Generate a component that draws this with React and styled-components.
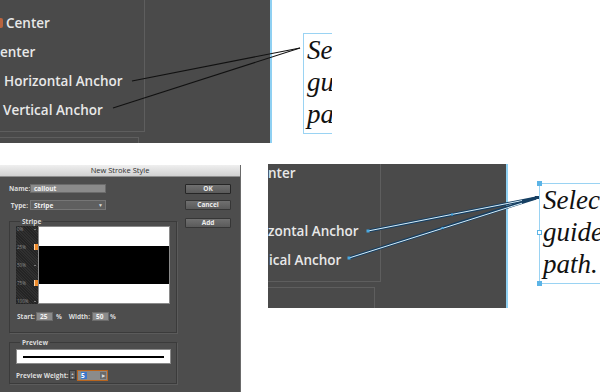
import React from "react";
import styled, { createGlobalStyle } from "styled-components";

const Global = createGlobalStyle`
  html, body { margin: 0; padding: 0; background: #fff; }
  body { width: 600px; height: 392px; overflow: hidden; font-family: "Open Sans", "Liberation Sans", sans-serif; }
  * { box-sizing: border-box; }
`;

const Page = styled.div`
  width: 600px;
  height: 392px;
  display: flex;
  flex-direction: column;
  background: #fff;
  overflow: hidden;
`;

const BottomRow = styled.div`
  display: flex;
  align-items: flex-start;
  margin-top: 21px;
  gap: 27px;
`;

/* ---------- InDesign canvas shots ---------- */

const ShotFrame = styled.div`
  position: relative;
  flex: none;
  display: flex;
  width: ${(p) => p.$w}px;
  height: ${(p) => p.$h}px;
  overflow: hidden;
  background: #fff;
`;

const Panel = styled.div`
  flex: none;
  width: ${(p) => p.$w + 2}px;
  height: 100%;
  background: #4a4a4a;
  border-right: 2px solid #8fd0f2;
  overflow: hidden;
`;

const PanelContent = styled.div`
  margin-left: ${(p) => -p.$dx}px;
  margin-top: ${(p) => -p.$dy}px;
  width: 320px;
`;

const InnerBox = styled.div`
  width: 145px;
  height: 132px;
  border-right: 1px solid #5e5e5e;
  border-bottom: 1px solid #5e5e5e;
  padding-top: 8px;
  display: flex;
  flex-direction: column;
`;

const Row = styled.div`
  height: 29px;
  display: flex;
  align-items: center;
  padding-left: ${(p) => p.$x}px;
  white-space: nowrap;
  font-family: "Open Sans", "DejaVu Sans", sans-serif;
  font-weight: 600;
  font-size: 13.5px;
  color: #e8e8e8;
`;

const RowIcon = styled.span`
  width: 3px;
  height: 10px;
  margin-left: -6px;
  margin-right: 3px;
  background: #b8633e;
  border-radius: 0 2px 2px 0;
`;

const LowerBox = styled.div`
  margin-top: 5px;
  width: 139px;
  height: 40px;
  border-top: 1px solid #5e5e5e;
  border-right: 1px solid #5e5e5e;
  padding: 15px 0 0 34px;
  font-size: 13px;
  font-weight: 600;
  color: #e4e4e4;
  line-height: 14px;
`;

const Gutter = styled.div`
  flex: 1;
  padding-left: 31px;
  padding-top: ${(p) => p.$top}px;
`;

const TextFrame = styled.div`
  position: relative;
  width: 150px;
  height: 101px;
  border: 1px solid #9ad3f3;
  padding: 0 0 0 3px;
  font-family: "Liberation Serif", "DejaVu Serif", serif;
  font-style: italic;
  font-size: 27px;
  line-height: 32px;
  color: #111;
  white-space: nowrap;
`;

const Handle = styled.span`
  position: absolute;
  left: -3px;
  top: ${(p) => p.$top};
  width: 5px;
  height: 5px;
  border: 1px solid #5cb4e6;
  background: ${(p) => (p.$filled ? "#5cb4e6" : "#fff")};
`;

const Overlay = styled.svg`
  position: absolute;
  left: 0;
  top: 0;
  pointer-events: none;
`;

const SCENE_LINES = [
  [132, 81, 300, 48],
  [113, 108, 300, 48],
];

function Shot({ w, h, panelW, dx, dy, rows, lower, selected }) {
  return (
    <ShotFrame $w={w} $h={h}>
      <Panel $w={panelW}>
        <PanelContent $dx={dx} $dy={dy}>
          <InnerBox>
            {rows.map((r, i) => (
              <Row key={i} $x={r.x}>
                {r.icon && <RowIcon />}
                {r.t}
              </Row>
            ))}
          </InnerBox>
          <LowerBox>{lower}</LowerBox>
        </PanelContent>
      </Panel>
      <Gutter $top={33 - dy}>
        <TextFrame>
          Select
          <br />
          guides
          <br />
          path.
          {selected && (
            <>
              <Handle $top="-3px" $filled />
              <Handle $top="46px" />
              <Handle $top="97px" $filled />
            </>
          )}
        </TextFrame>
      </Gutter>
      <Overlay width={w} height={h} viewBox={`0 0 ${w} ${h}`}>
        {SCENE_LINES.map(([x1, y1, x2, y2], i) => {
          const a = [x1 - dx, y1 - dy, x2 - dx, y2 - dy];
          return selected ? (
            <g key={i}>
              <line x1={a[0]} y1={a[1]} x2={a[2]} y2={a[3]} stroke="#163f62" strokeWidth="3" />
              <line x1={a[0]} y1={a[1]} x2={a[2] - 14} y2={a[3] + 2.6 * (i + 1)} stroke="#d6eefb" strokeWidth="1" />
              <rect x={a[0] - 1.5} y={a[1] - 1.5} width="3" height="3" fill="#4aa8e0" />
              <rect x={(a[0] + a[2]) / 2 - 1} y={(a[1] + a[3]) / 2 - 1} width="2" height="2" fill="#4aa8e0" />
            </g>
          ) : (
            <line key={i} x1={a[0]} y1={a[1]} x2={a[2]} y2={a[3]} stroke="#111" strokeWidth="1.1" />
          );
        })}
        {selected && <rect x={300 - dx - 1} y={48 - dy - 2} width="4" height="3" fill="#163f62" />}
      </Overlay>
    </ShotFrame>
  );
}

/* ---------- Dialog ---------- */

const Dialog = styled.div`
  flex: none;
  width: 241px;
  height: 227px;
  margin-top: 1px;
  display: flex;
  flex-direction: column;
  background: #4d4d4d;
  border-right: 1px solid #6a6a6a;
  font-family: "Open Sans", "Liberation Sans", sans-serif;
`;

const TitleBar = styled.div`
  height: 12px;
  background: linear-gradient(#efefef, #d1d1d1);
  border-bottom: 1px solid #8e8e8e;
  text-align: center;
  font-size: 7.5px;
  line-height: 11px;
  color: #2e2e2e;
`;

const DialogBody = styled.div`
  flex: 1;
  display: grid;
  grid-template-columns: 185px 46px;
  align-items: start;
`;

const LeftCol = styled.div`
  display: flex;
  flex-direction: column;
  padding: 6px 0 0 9px;
`;

const FieldRow = styled.div`
  display: flex;
  align-items: center;
  height: 10px;
  margin-top: ${(p) => p.$mt || 0}px;
`;

const Label = styled.span`
  width: ${(p) => p.$w || 21}px;
  padding-right: 2px;
  text-align: ${(p) => p.$align || "right"};
  font-size: 6.5px;
  font-weight: 700;
  color: #dcdcdc;
  white-space: nowrap;
  margin-left: ${(p) => p.$ml || 0}px;
`;

const TextInput = styled.div`
  width: ${(p) => p.$w}px;
  height: ${(p) => p.$h || 9}px;
  background: ${(p) => p.$bg || "#8b8b8b"};
  border: 1px solid ${(p) => p.$border || "#6b6b6b"};
  font-size: 6.5px;
  font-weight: 700;
  line-height: 7px;
  color: #f2f2f2;
  padding-left: 3px;
  display: flex;
  align-items: center;
  justify-content: space-between;
`;

const SelArrow = styled.span`
  font-size: 5px;
  color: #ddd;
  padding-right: 2px;
`;

const Group = styled.fieldset`
  margin: ${(p) => p.$mt}px 0 0 0;
  width: 168px;
  padding: 0 0 ${(p) => p.$pb}px 6px;
  border: 1px solid #3b3b3b;
  box-shadow: 1px 1px 0 #5b5b5b;
`;

const Legend = styled.legend`
  padding: 0 2px;
  margin-left: 4px;
  font-size: 6.5px;
  font-weight: 700;
  color: #dcdcdc;
  line-height: 9px;
`;

const StripeCanvas = styled.div`
  display: flex;
  width: 154px;
  height: 78px;
`;

const Ruler = styled.div`
  width: 22px;
  height: 100%;
  background-color: #2b2b2b;
  background-image: repeating-linear-gradient(45deg, #242424 0 1px, #303030 1px 2px);
  display: flex;
  flex-direction: column;
  justify-content: space-between;
  padding: 0 0 0 1px;
`;

const Tick = styled.div`
  height: 6px;
  display: flex;
  align-items: center;
  justify-content: space-between;
  font-size: 4.5px;
  color: #8f8f8f;
  line-height: 6px;
`;

const TickMark = styled.span`
  width: ${(p) => (p.$marker ? 4 : 2)}px;
  height: ${(p) => (p.$marker ? 6 : 1)}px;
  margin-right: ${(p) => (p.$marker ? 0 : 2)}px;
  background: ${(p) => (p.$marker ? "#ee8a2a" : "#777")};
  border-left: ${(p) => (p.$marker ? "1px solid #ffd9b0" : "none")};
`;

const Bands = styled.div`
  flex: 1;
  display: flex;
  flex-direction: column;
  border: 1px solid #8a8a8a;
`;

const Band = styled.div`
  height: ${(p) => p.$h}px;
  background: ${(p) => p.$c};
`;

const PreviewBox = styled.div`
  width: 155px;
  height: 15px;
  margin-top: 2px;
  background: #fff;
  border: 1px solid #8a8a8a;
  display: flex;
  align-items: center;
  padding: 0 6px;
`;

const PreviewLine = styled.div`
  flex: 1;
  height: 2px;
  background: #000;
`;

const Stepper = styled.div`
  width: 7px;
  height: 10px;
  margin-left: 3px;
  margin-right: 1px;
  background: #5e5e5e;
  border: 1px solid #3a3a3a;
  display: flex;
  flex-direction: column;
  align-items: center;
  justify-content: space-around;
  font-size: 3.5px;
  line-height: 3px;
  color: #ccc;
`;

const Selected = styled.span`
  background: #3a78cc;
  color: #fff;
  padding: 0 2px 0 0;
`;

const DropBtn = styled.span`
  width: 6px;
  height: 7px;
  margin-right: 1px;
  background: #6a6a6a;
  color: #ddd;
  font-size: 4px;
  display: flex;
  align-items: center;
  justify-content: center;
`;

const RightCol = styled.div`
  display: flex;
  flex-direction: column;
  padding-top: 7px;
`;

const Button = styled.div`
  width: 46px;
  height: 10px;
  margin-top: ${(p) => p.$mt || 0}px;
  background: linear-gradient(#707070, #5a5a5a);
  border: 1px solid ${(p) => (p.$default ? "#262626" : "#363636")};
  border-radius: 1px;
  text-align: center;
  font-size: 6.5px;
  font-weight: 700;
  line-height: 8px;
  color: #ececec;
`;

const TICKS = [
  { l: "0%" },
  { l: "25%", m: true },
  { l: "50%" },
  { l: "75%", m: true },
  { l: "100%" },
];

function StrokeDialog() {
  return (
    <Dialog>
      <TitleBar>New Stroke Style</TitleBar>
      <DialogBody>
        <LeftCol>
          <FieldRow>
            <Label>Name:</Label>
            <TextInput $w={76}>callout</TextInput>
          </FieldRow>
          <FieldRow $mt={7}>
            <Label>Type:</Label>
            <TextInput $w={76} $h={10} $bg="#5f5f5f" $border="#767676">
              Stripe
              <SelArrow>▼</SelArrow>
            </TextInput>
          </FieldRow>
          <Group $mt={7} $pb={11}>
            <Legend>Stripe</Legend>
            <StripeCanvas>
              <Ruler>
                {TICKS.map((t) => (
                  <Tick key={t.l}>
                    {t.l}
                    <TickMark $marker={t.m} />
                  </Tick>
                ))}
              </Ruler>
              <Bands>
                <Band $h={19} $c="#fff" />
                <Band $h={38} $c="#000" />
                <Band $h={19} $c="#fff" />
              </Bands>
            </StripeCanvas>
            <FieldRow $mt={7}>
              <Label $w={19} $align="left" $ml={1}>Start:</Label>
              <TextInput $w={17}>25</TextInput>
              <Label $w={14} $align="center">%</Label>
              <Label $w={25}>Width:</Label>
              <TextInput $w={17}>50</TextInput>
              <Label $w={10} $align="center">%</Label>
            </FieldRow>
          </Group>
          <Group $mt={5} $pb={3}>
            <Legend>Preview</Legend>
            <PreviewBox>
              <PreviewLine />
            </PreviewBox>
            <FieldRow $mt={6}>
              <Label $w={50} $align="left">Preview Weight:</Label>
              <Stepper>
                <span>▲</span>
                <span>▼</span>
              </Stepper>
              <TextInput $w={31} $h={11} $border="#b8651f">
                <Selected>5</Selected>
                <DropBtn>▶</DropBtn>
              </TextInput>
            </FieldRow>
          </Group>
        </LeftCol>
        <RightCol>
          <Button $default>OK</Button>
          <Button $mt={6}>Cancel</Button>
          <Button $mt={8}>Add</Button>
        </RightCol>
      </DialogBody>
    </Dialog>
  );
}

const TOP_ROWS = [
  { t: "Center", x: 6, icon: true },
  { t: "enter", x: 0 },
  { t: "Horizontal Anchor", x: 4 },
  { t: "Vertical Anchor", x: 3 },
];

const BOTTOM_ROWS = [
  { t: "nter", x: 32 },
  { t: "", x: 32 },
  { t: "zontal Anchor", x: 32 },
  { t: "ical Anchor", x: 33 },
];

export default function App() {
  return (
    <Page>
      <Global />
      <Shot w={332} h={143} panelW={270} dx={0} dy={0} rows={TOP_ROWS} lower="" />
      <BottomRow>
        <StrokeDialog />
        <Shot w={332} h={144} panelW={238} dx={32} dy={14} rows={BOTTOM_ROWS} lower="a" selected />
      </BottomRow>
    </Page>
  );
}
